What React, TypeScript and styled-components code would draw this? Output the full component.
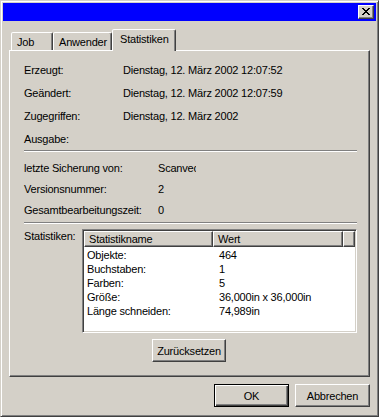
import { Fragment } from "react";
import styled, { createGlobalStyle } from "styled-components";

const GlobalStyle = createGlobalStyle`
  html, body {
    margin: 0;
    padding: 0;
    background: #d4d0c8;
  }
  body {
    font-family: "Liberation Sans", Arial, sans-serif;
    font-size: 11px;
    color: #000;
  }
`;

const Window = styled.div`
  box-sizing: border-box;
  width: 379px;
  height: 417px;
  padding: 2px;
  background: #d4d0c8;
  border: 1px solid;
  border-color: #d4d0c8 #404040 #404040 #d4d0c8;
  box-shadow: inset 1px 1px #fff, inset -1px -1px #808080;
  display: flex;
  flex-direction: column;
  letter-spacing: -0.2px;
`;

const TitleBar = styled.div`
  height: 18px;
  background: #0000ff;
  display: flex;
  align-items: center;
  justify-content: flex-end;
  padding-right: 2px;
`;

const CloseButton = styled.div`
  box-sizing: border-box;
  width: 16px;
  height: 14px;
  background: #d4d0c8;
  border: 1px solid;
  border-color: #fff #404040 #404040 #fff;
  box-shadow: inset -1px -1px #808080;
  display: flex;
  align-items: center;
  justify-content: center;
  padding: 0 1px 1px 0;
`;

const TabStrip = styled.div`
  margin-top: 8px;
  height: 21px;
  padding-left: 8px;
  display: flex;
  align-items: flex-end;
`;

const Tab = styled.div<{ $active?: boolean; $w: number }>`
  box-sizing: border-box;
  position: relative;
  z-index: ${(p) => (p.$active ? 1 : 0)};
  width: ${(p) => p.$w}px;
  height: ${(p) => (p.$active ? 22 : 18)}px;
  margin-bottom: ${(p) => (p.$active ? -1 : 0)}px;
  padding-left: ${(p) => (p.$active ? 7 : 5)}px;
  padding-bottom: ${(p) => (p.$active ? 3 : 0)}px;
  display: flex;
  align-items: center;
  background: #d4d0c8;
  border: 1px solid;
  border-bottom: none;
  border-color: #fff #404040 transparent #fff;
  border-radius: 2px 2px 0 0;
  box-shadow: inset -1px 0 #808080;
`;

const Panel = styled.div`
  box-sizing: border-box;
  height: 327px;
  margin: 0 6px;
  padding: 7px 12px 0 14px;
  border: 1px solid;
  border-color: #fff #404040 #404040 #fff;
  box-shadow: inset -1px -1px #808080;
  display: flex;
  flex-direction: column;
`;

const InfoGrid = styled.div<{ $label: number; $row: number; $top?: number }>`
  display: grid;
  grid-template-columns: ${(p) => p.$label}px 1fr;
  grid-auto-rows: ${(p) => p.$row}px;
  align-items: center;
  margin-top: ${(p) => p.$top ?? 0}px;
  white-space: nowrap;
`;

const Value = styled.span<{ $clip?: number }>`
  overflow: hidden;
  max-width: ${(p) => (p.$clip ? `${p.$clip}px` : "none")};
`;

const Separator = styled.div<{ $top?: number }>`
  height: 0;
  margin-top: ${(p) => p.$top ?? 0}px;
  border-top: 1px solid #808080;
  border-bottom: 1px solid #fff;
`;

const StatsRow = styled.div`
  display: grid;
  grid-template-columns: 58px 275px;
  margin-top: 5px;
`;

const StatsLabel = styled.div`
  line-height: 14px;
`;

const ListView = styled.div`
  box-sizing: border-box;
  height: 104px;
  padding: 1px;
  background: #fff;
  border: 1px solid;
  border-color: #808080 #fff #fff #808080;
  box-shadow: inset 1px 1px #404040, inset -1px -1px #d4d0c8;
  display: flex;
  flex-direction: column;
`;

const Header = styled.div`
  display: flex;
  height: 16px;
  flex: none;
`;

const HeaderCell = styled.div<{ $w?: number }>`
  box-sizing: border-box;
  width: ${(p) => (p.$w ? `${p.$w}px` : "auto")};
  flex: ${(p) => (p.$w ? "none" : "1")};
  padding-left: 4px;
  display: flex;
  align-items: center;
  background: #d4d0c8;
  border: 1px solid;
  border-color: #fff #404040 #404040 #fff;
  box-shadow: inset -1px -1px #808080;
`;

const ListBody = styled.div`
  flex: 1;
  padding-top: 1px;
`;

const ListRow = styled.div`
  display: grid;
  grid-template-columns: 129px 1fr;
  height: 14px;
  align-items: center;
  white-space: nowrap;
  & > span:first-child {
    padding-left: 3px;
  }
  & > span:last-child {
    padding-left: 6px;
  }
`;

const Button = styled.button<{ $default?: boolean; $w: number; $h: number }>`
  box-sizing: border-box;
  width: ${(p) => p.$w}px;
  height: ${(p) => p.$h}px;
  padding: 0;
  font: inherit;
  letter-spacing: inherit;
  color: #000;
  background: #d4d0c8;
  border: 1px solid;
  border-color: ${(p) => (p.$default ? "#000" : "#fff #404040 #404040 #fff")};
  box-shadow: ${(p) =>
    p.$default
      ? "inset 1px 1px #fff, inset -1px -1px #404040, inset -2px -2px #808080"
      : "inset -1px -1px #808080"};
`;

const ResetWrap = styled.div`
  display: flex;
  justify-content: center;
  margin-top: 6px;
  padding-right: 3px;
`;

const Footer = styled.div`
  margin-top: 7px;
  padding-right: 6px;
  display: flex;
  justify-content: flex-end;
  gap: 6px;
`;

const closeGlyph = [
  [0, 0, 2], [6, 0, 2],
  [1, 1, 2], [5, 1, 2],
  [2, 2, 4],
  [3, 3, 2],
  [2, 4, 4],
  [1, 5, 2], [5, 5, 2],
  [0, 6, 2], [6, 6, 2],
];

const general: [string, string, number?][] = [
  ["Erzeugt:", "Dienstag, 12. März 2002 12:07:52"],
  ["Geändert:", "Dienstag, 12. März 2002 12:07:59"],
  ["Zugegriffen:", "Dienstag, 12. März 2002"],
  ["Ausgabe:", ""],
];

// the static text box is narrower than the name, so it gets cut off
const history: [string, string, number?][] = [
  ["letzte Sicherung von:", "Scanvec", 38],
  ["Versionsnummer:", "2"],
  ["Gesamtbearbeitungszeit:", "0"],
];

const stats = [
  ["Objekte:", "464"],
  ["Buchstaben:", "1"],
  ["Farben:", "5"],
  ["Größe:", "36,000in x 36,000in"],
  ["Länge schneiden:", "74,989in"],
];

export default function App() {
  return (
    <>
      <GlobalStyle />
      <Window>
        <TitleBar>
          <CloseButton>
            <svg width="8" height="7" viewBox="0 0 8 7" shapeRendering="crispEdges">
              {closeGlyph.map(([x, y, w], i) => (
                <rect key={i} x={x} y={y} width={w} height={1} fill="#000" />
              ))}
            </svg>
          </CloseButton>
        </TitleBar>

        <TabStrip>
          <Tab $w={42}>Job</Tab>
          <Tab $w={59}>Anwender</Tab>
          <Tab $w={64} $active>Statistiken</Tab>
        </TabStrip>

        <Panel>
          <InfoGrid $label={99} $row={23}>
            {general.map(([k, v]) => (
              <Fragment key={k}>
                <span>{k}</span>
                <Value>{v}</Value>
              </Fragment>
            ))}
          </InfoGrid>
          <Separator />
          <InfoGrid $label={134} $row={21} $top={5}>
            {history.map(([k, v, clip]) => (
              <Fragment key={k}>
                <span>{k}</span>
                <Value $clip={clip}>{v}</Value>
              </Fragment>
            ))}
          </InfoGrid>
          <Separator $top={2} />
          <StatsRow>
            <StatsLabel>Statistiken:</StatsLabel>
            <ListView>
              <Header>
                <HeaderCell $w={129}>Statistikname</HeaderCell>
                <HeaderCell $w={130}>Wert</HeaderCell>
                <HeaderCell />
              </Header>
              <ListBody>
                {stats.map(([k, v]) => (
                  <ListRow key={k}>
                    <span>{k}</span>
                    <span>{v}</span>
                  </ListRow>
                ))}
              </ListBody>
            </ListView>
          </StatsRow>
          <ResetWrap>
            <Button $w={74} $h={23}>Zurücksetzen</Button>
          </ResetWrap>
        </Panel>

        <Footer>
          <Button $w={75} $h={23} $default>OK</Button>
          <Button $w={75} $h={23}>Abbrechen</Button>
        </Footer>
      </Window>
    </>
  );
}
